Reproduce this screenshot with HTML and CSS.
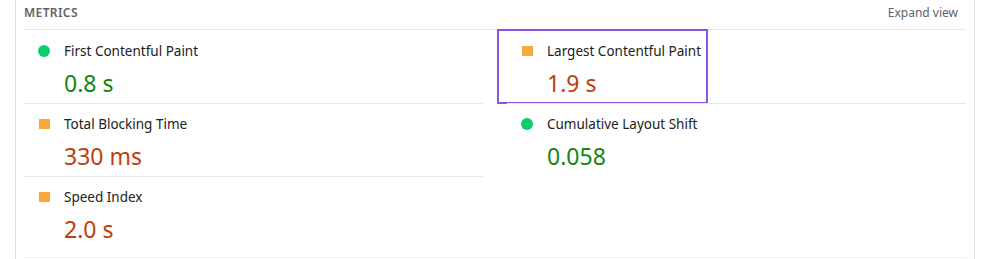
FILE: index.html
```html
<!DOCTYPE html>
<html lang="en">
<head>
    <meta charset="UTF-8">
    <title>Metrics</title>
    <link rel="stylesheet" href="styles.css">
</head>
<body>
    <div class="report">
        <div class="section-header">
            <span class="section-title">Metrics</span>
            <span class="expand-link">Expand view</span>
        </div>

        <div class="metrics">
            <div class="metric">
                <span class="icon pass"></span>
                <div class="metric-label">First Contentful Paint</div>
                <div class="metric-value pass-text">0.8 s</div>
            </div>
            <div class="metric">
                <span class="icon average"></span>
                <div class="metric-label">Largest Contentful Paint</div>
                <div class="metric-value average-text">1.9 s</div>
                <div class="highlight"></div>
            </div>
            <div class="metric">
                <span class="icon average"></span>
                <div class="metric-label">Total Blocking Time</div>
                <div class="metric-value average-text">330 ms</div>
            </div>
            <div class="metric">
                <span class="icon pass"></span>
                <div class="metric-label">Cumulative Layout Shift</div>
                <div class="metric-value pass-text">0.058</div>
            </div>
            <div class="metric">
                <span class="icon average"></span>
                <div class="metric-label">Speed Index</div>
                <div class="metric-value average-text">2.0 s</div>
            </div>
        </div>

        <div class="next-section"></div>
    </div>
</body>
</html>
```

FILE: styles.css
```css
* {
    margin: 0;
    padding: 0;
    box-sizing: border-box;
}

body {
    font-family: 'Noto Sans', 'Open Sans', sans-serif;
    background: #ffffff;
    color: #212121;
}

.report {
    width: 960px;
    height: 259px;
    margin-left: 15px;
    padding: 0 8px;
    border-left: 1px solid #dcdcdc;
    border-right: 1px solid #dcdcdc;
}

.section-header {
    display: flex;
    justify-content: space-between;
    align-items: center;
    height: 30px;
    padding-bottom: 4px;
    border-bottom: 1px solid #e6e6e6;
}

.section-title {
    font-size: 12px;
    font-weight: 600;
    text-transform: uppercase;
    letter-spacing: 0.4px;
    color: #5f6368;
}

.expand-link {
    font-size: 12px;
    color: #5f6368;
    margin-right: 8px;
}

.metrics {
    display: grid;
    grid-template-columns: 1fr 1fr;
    column-gap: 24px;
}

.metric {
    position: relative;
    display: grid;
    grid-template-columns: 20px 1fr;
    column-gap: 10px;
    height: 73px;
    padding: 10px 10px 0;
    border-top: 1px solid #e6e6e6;
}

.metric:first-child,
.metric:nth-child(2) {
    border-top: none;
    padding-top: 11px;
}

.icon {
    align-self: start;
    justify-self: center;
    grid-row: 1;
}

.icon.pass {
    width: 12px;
    height: 12px;
    margin-top: 4px;
    border-radius: 50%;
    background: #0cce6b;
}

.icon.average {
    width: 11px;
    height: 10px;
    margin-top: 5px;
    background: #fba73a;
}

.metric-label {
    grid-column: 2;
    font-size: 13.5px;
    line-height: 20px;
    margin-bottom: 2px;
}

.metric-value {
    grid-column: 2;
    font-size: 23px;
    line-height: 34px;
}

.pass-text {
    color: #0f870f;
}

.average-text {
    color: #b9410b;
}

.highlight {
    position: absolute;
    top: -1px;
    left: -10px;
    width: 211px;
    height: 75px;
    border: 2px solid #8a55e6;
}

.next-section {
    margin-top: 8px;
    border-top: 1px solid #efefef;
}
```
